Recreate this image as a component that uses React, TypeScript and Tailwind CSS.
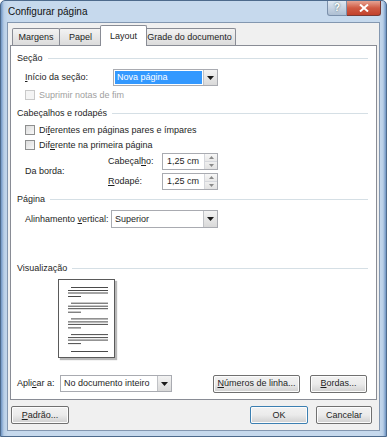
import React from 'react'

// Vista-style "Configurar página" dialog, Layout tab

const FONT = { fontFamily: '"Liberation Sans", Arial, sans-serif' }

function U({ children }: { children: React.ReactNode }) {
  return <span className="underline underline-offset-1">{children}</span>
}

function GroupHeader({ label }: { label: string }) {
  return (
    <div className="flex items-center h-[12px] pl-[6px] pr-[8px] gap-[5px]">
      <span className="text-[#1e1e1e]">{label}</span>
      <div className="flex-1 h-px bg-[#d5dfe5]" />
    </div>
  )
}

function Checkbox({ disabled, children }: { disabled?: boolean; children: React.ReactNode }) {
  return (
    <div className="flex items-center h-[12px] pl-[14px] gap-[4px]">
      <div
        className={
          disabled
            ? 'w-[10px] h-[10px] border border-[#c9c9c9] bg-[#f4f4f4]'
            : 'w-[10px] h-[10px] border border-[#8e8f8f] bg-gradient-to-br from-[#dcdcdc] to-[#f8f8f8]'
        }
      />
      <span className={disabled ? 'text-[#a0a0a0]' : 'text-[#1e1e1e]'}>{children}</span>
    </div>
  )
}

function DropButton() {
  return (
    <div className="w-[14px] h-full border-l border-[#c0c2c6] bg-gradient-to-b from-[#f3f3f3] to-[#d9d9d9] flex items-center justify-center">
      <svg width="7" height="4" viewBox="0 0 7 4">
        <path d="M0 0h7L3.5 4z" fill="#1a1a1a" />
      </svg>
    </div>
  )
}

function Combo({ value, width, selected }: { value: string; width: string; selected?: boolean }) {
  return (
    <div className={`${width} h-full flex border border-[#a9abb1] bg-white`}>
      <div className="flex-1 flex items-center p-[1px]">
        <div
          className={
            selected
              ? 'w-full h-full flex items-center px-[2px] bg-[#3399ff] text-white'
              : 'w-full h-full flex items-center px-[2px] text-[#1e1e1e]'
          }
        >
          {value}
        </div>
      </div>
      <DropButton />
    </div>
  )
}

function Spin({ value }: { value: string }) {
  return (
    <div className="w-[56px] h-[17px] flex border border-[#a9abb1] bg-white">
      <div className="flex-1 flex items-center pl-[4px] text-[#1e1e1e]">{value}</div>
      <div className="w-[13px] flex flex-col border-l border-[#d5d7dc]">
        <div className="flex-1 flex items-center justify-center bg-gradient-to-b from-[#f7f7f7] to-[#e8e8e8] border-b border-[#d5d7dc]">
          <svg width="5" height="3" viewBox="0 0 5 3">
            <path d="M0 3h5L2.5 0z" fill="#8a8a8a" />
          </svg>
        </div>
        <div className="flex-1 flex items-center justify-center bg-gradient-to-b from-[#efefef] to-[#e2e2e2]">
          <svg width="5" height="3" viewBox="0 0 5 3">
            <path d="M0 0h5L2.5 3z" fill="#8a8a8a" />
          </svg>
        </div>
      </div>
    </div>
  )
}

function Button({ width, children, focused }: { width: string; children: React.ReactNode; focused?: boolean }) {
  return (
    <div
      className={`${width} h-[18px] rounded-[2px] border ${
        focused ? 'border-[#3c7fb1]' : 'border-[#707070]'
      } bg-gradient-to-b from-[#f2f2f2] via-[#ebebeb] to-[#cfcfcf] flex items-center justify-center text-[#1e1e1e] shadow-[inset_0_0_0_1px_#fcfcfc]`}
    >
      {children}
    </div>
  )
}

function PagePreview() {
  const groups = [0, 1, 2, 3]
  return (
    <div className="w-[57px] h-[79px] bg-white border border-[#5a5a5a] shadow-[2px_2px_1px_#b8b8b8]">
      <svg width="55" height="77" viewBox="0 0 55 77">
        {groups.map((g) => {
          const y = 7 + g * 15.7
          return (
            <g key={g} stroke="#4a4a4a" strokeWidth="1">
              <line x1="12" x2="49" y1={y + 0.5} y2={y + 0.5} />
              <line x1="9" x2="49" y1={y + 3.5} y2={y + 3.5} />
              <line x1="9" x2="49" y1={y + 6} y2={y + 6} />
              <line x1="9" x2="22" y1={y + 9.5} y2={y + 9.5} />
            </g>
          )
        })}
        <line x1="12" x2="49" y1="71.5" y2="71.5" stroke="#4a4a4a" strokeWidth="1" />
      </svg>
    </div>
  )
}

function Tab({ label, width, selected }: { label: string; width: string; selected?: boolean }) {
  if (selected) {
    return (
      <div
        className={`${width} h-[21px] -ml-[2px] -mr-[3px] z-10 relative border border-b-0 border-[#898c95] bg-white flex items-center justify-center text-[#1e1e1e] rounded-t-[2px]`}
      >
        {label}
      </div>
    )
  }
  return (
    <div
      className={`${width} h-[18px] border border-b-0 border-[#898c95] bg-gradient-to-b from-[#f3f3f3] to-[#dadada] flex items-center justify-center text-[#1e1e1e] -ml-px first:ml-0 rounded-t-[2px]`}
    >
      {label}
    </div>
  )
}

export default function App() {
  return (
    <div
      className="w-[387px] h-[437px] flex flex-col text-[9px] leading-none whitespace-nowrap border border-[#4d6a8c] rounded-t-[5px] bg-[linear-gradient(to_right,#6f95c4_0px,#b9cfe7_3px,#c6d9ed_7px,#c6d9ed_calc(100%-7px),#b9cfe7_calc(100%-3px),#6f95c4_100%)] relative overflow-hidden"
      style={FONT}
    >
      {/* Title bar */}
      <div className="h-[21px] flex items-start justify-between pl-[7px] pr-[5px]">
        <span className="mt-[6px] text-[10px] text-[#111]">Configurar página</span>
        <div className="flex">
          <div className="w-[20px] h-[15px] rounded-bl-[3px] border border-t-0 border-[#7b90ab] bg-gradient-to-b from-[#dfe8f2] to-[#aebfd3] flex items-center justify-center text-[10px] text-white font-bold [text-shadow:0_0_2px_#355]">
            ?
          </div>
          <div className="w-[34px] h-[15px] rounded-br-[3px] border border-t-0 border-l-0 border-[#7a3a34] bg-gradient-to-b from-[#e6a393] via-[#cf5a43] to-[#c2412c] flex items-center justify-center">
            <svg width="10" height="8" viewBox="0 0 10 8">
              <path d="M1 0.5l8 7M9 0.5l-8 7" stroke="#fff" strokeWidth="2" />
            </svg>
          </div>
        </div>
      </div>

      {/* Client area */}
      <div className="mx-[6px] h-[409px] border border-[#8397b0] bg-[#f0f0f0] flex flex-col px-[2px] pt-[2px]">
        {/* Tabs */}
        <div className="flex items-end pl-[2px] h-[21px]">
          <Tab label="Margens" width="w-[48px]" />
          <Tab label="Papel" width="w-[43px]" />
          <Tab label="Layout" width="w-[47px]" selected />
          <Tab label="Grade do documento" width="w-[93px]" />
        </div>

        {/* Tab panel */}
        <div className="h-[355px] -mt-px border border-[#898c95] bg-white flex flex-col pt-[6px]">
          <GroupHeader label="Seção" />
          <div className="flex items-center h-[17px] mt-[5px] pl-[14px]">
            <span className="w-[88px] text-[#1e1e1e]">
              <U>I</U>nício da seção:
            </span>
            <Combo value="Nova página" width="w-[105px]" selected />
          </div>
          <div className="mt-[3px]">
            <Checkbox disabled>Suprimir notas de fim</Checkbox>
          </div>

          <div className="mt-[6px]">
            <GroupHeader label="Cabeçalhos e rodapés" />
          </div>
          <div className="mt-[5px]">
            <Checkbox>
              Di<U>f</U>erentes em páginas pares e ímpares
            </Checkbox>
          </div>
          <div className="mt-[3px]">
            <Checkbox>
              Dif<U>e</U>rente na primeira página
            </Checkbox>
          </div>
          <div className="flex items-center mt-[2px] pl-[14px]">
            <span className="w-[83px] text-[#1e1e1e]">Da borda:</span>
            <div className="flex flex-col gap-[3px]">
              <div className="flex items-center">
                <span className="w-[54px] text-[#1e1e1e]">
                  Cabeçal<U>h</U>o:
                </span>
                <Spin value="1,25 cm" />
              </div>
              <div className="flex items-center">
                <span className="w-[54px] text-[#1e1e1e]">
                  <U>R</U>odapé:
                </span>
                <Spin value="1,25 cm" />
              </div>
            </div>
          </div>

          <div className="mt-[3px]">
            <GroupHeader label="Página" />
          </div>
          <div className="flex items-center h-[18px] mt-[5px] pl-[14px]">
            <span className="w-[86px] text-[#1e1e1e]">
              Alinhamento <U>v</U>ertical:
            </span>
            <Combo value="Superior" width="w-[107px]" />
          </div>

          <div className="mt-[34px]">
            <GroupHeader label="Visualização" />
          </div>
          <div className="mt-[5px] pl-[47px]">
            <PagePreview />
          </div>

          <div className="flex items-center h-[17px] mt-[17px] pl-[6px] pr-[9px]">
            <span className="w-[43px] text-[#1e1e1e]">
              Apli<U>c</U>ar a:
            </span>
            <Combo value="No documento inteiro" width="w-[112px]" />
            <div className="flex-1" />
            <Button width="w-[87px]">
              <span>
                <U>N</U>úmeros de linha...
              </span>
            </Button>
            <div className="w-[10px]" />
            <Button width="w-[57px]">
              <span>
                <U>B</U>ordas...
              </span>
            </Button>
          </div>
        </div>

        {/* Bottom buttons */}
        <div className="flex items-center mt-[6px] pl-[1px] pr-[5px]">
          <Button width="w-[58px]">
            <span>
              <U>P</U>adrão...
            </span>
          </Button>
          <div className="flex-1" />
          <Button width="w-[58px]" focused>
            OK
          </Button>
          <div className="w-[8px]" />
          <Button width="w-[56px]">Cancelar</Button>
        </div>
      </div>
    </div>
  )
}
